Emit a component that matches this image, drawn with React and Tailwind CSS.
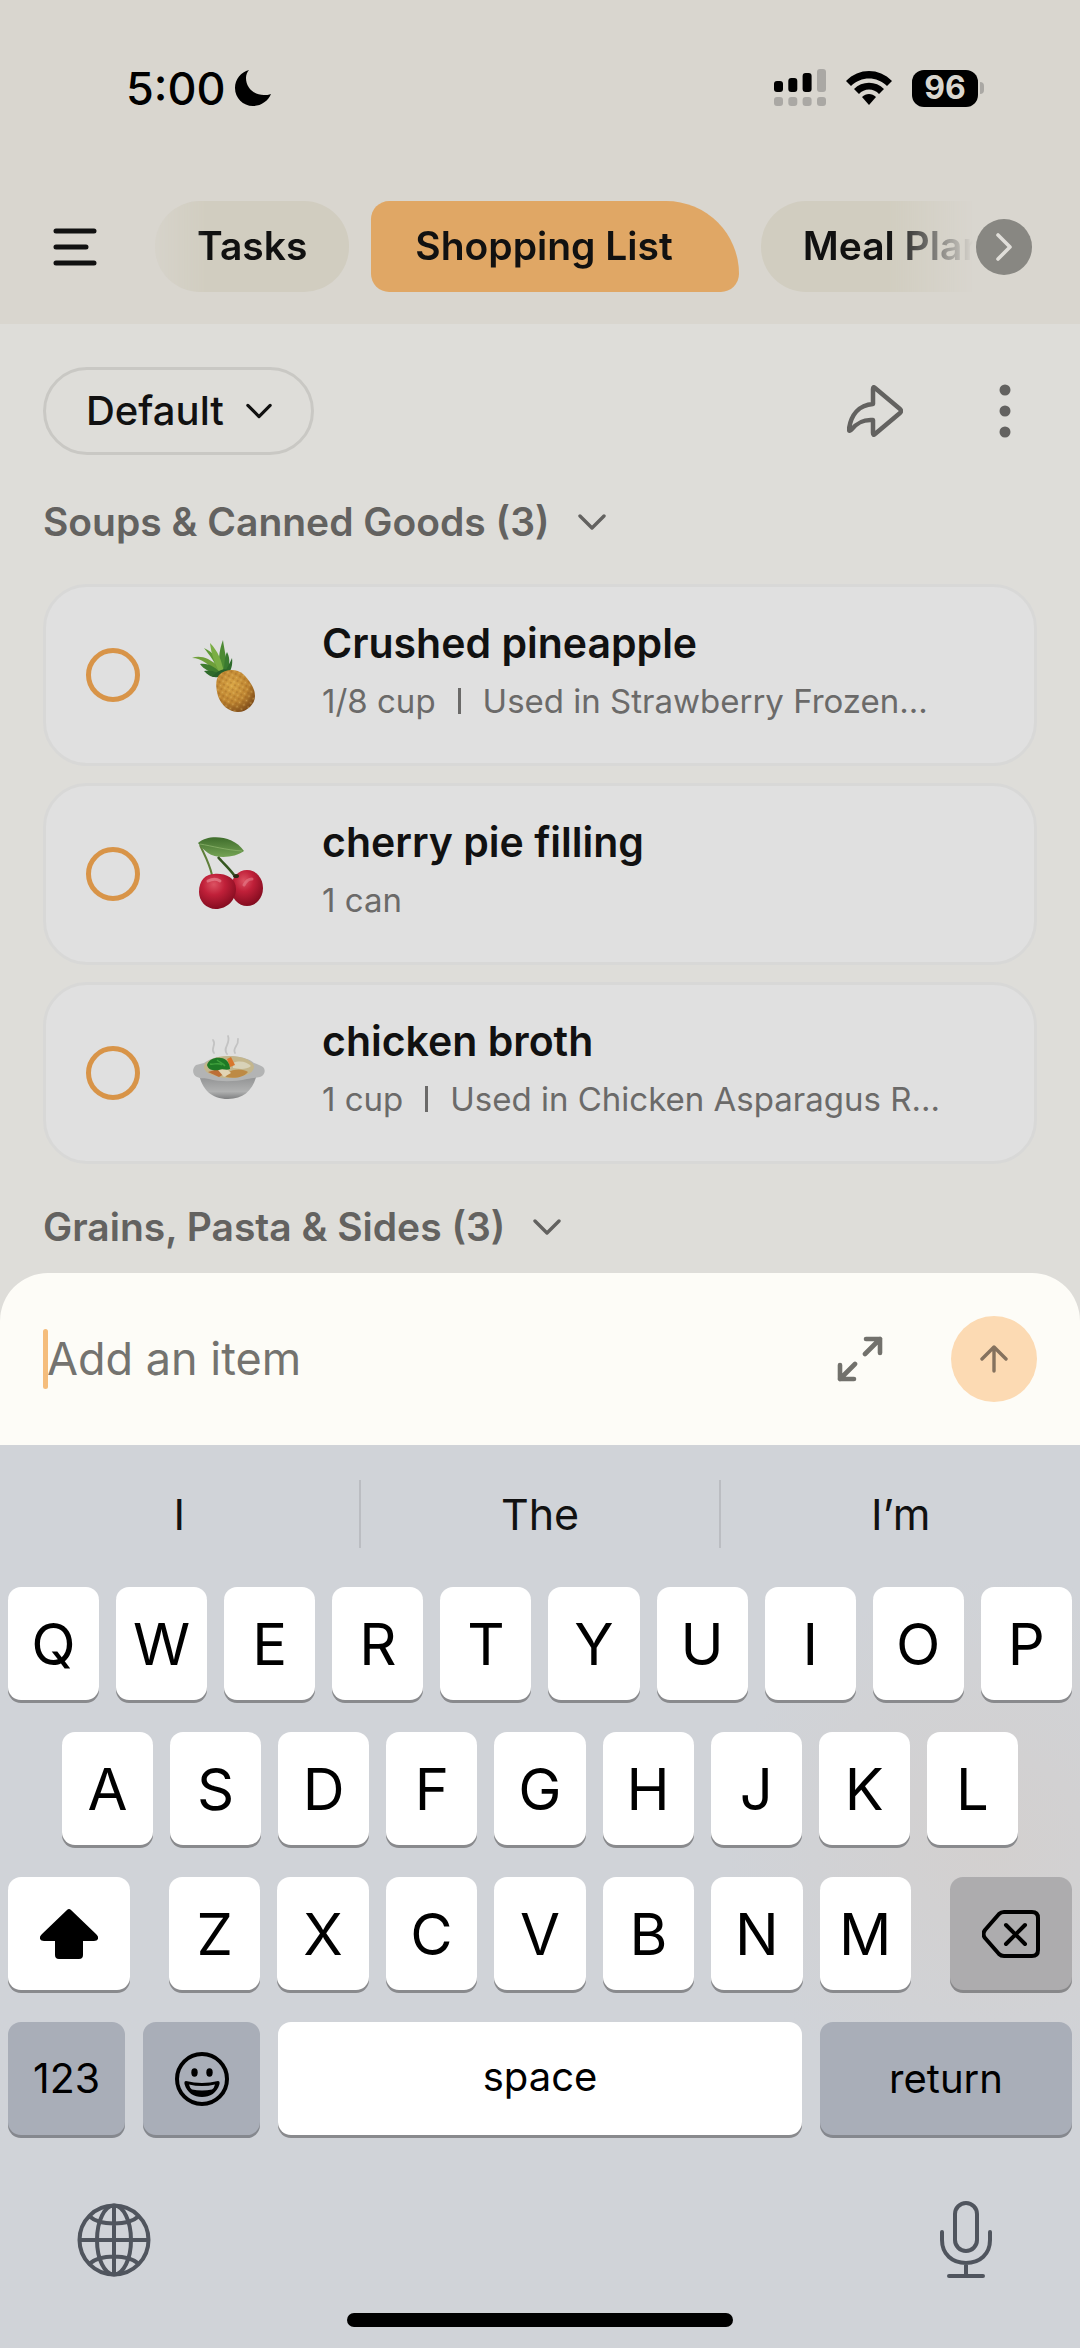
import { useState } from "react";

const soups = [
  {
    id: "pineapple",
    name: "Crushed pineapple",
    amount: "1/8 cup",
    usedIn: "Used in Strawberry Frozen...",
    Picture: Pineapple,
  },
  {
    id: "cherry",
    name: "cherry pie filling",
    amount: "1 can",
    Picture: Cherries,
  },
  {
    id: "broth",
    name: "chicken broth",
    amount: "1 cup",
    usedIn: "Used in Chicken Asparagus R...",
    Picture: Soup,
  },
];

function Pineapple() {
  return (
    <svg viewBox="0 0 120 110" className="h-[110px] w-[120px]" aria-hidden="true">
      <defs>
        <radialGradient id="pineBody" cx="0.4" cy="0.35" r="0.7">
          <stop offset="0" stopColor="#d9a545" />
          <stop offset="0.6" stopColor="#bd8330" />
          <stop offset="1" stopColor="#7c4a18" />
        </radialGradient>
        <pattern id="pineSkin" width="5" height="5" patternUnits="userSpaceOnUse" patternTransform="rotate(30)">
          <circle cx="1.5" cy="1.5" r="1" fill="#edc873" />
          <circle cx="4" cy="4" r="0.9" fill="#8f5b1e" />
        </pattern>
      </defs>
      <g>
        <path d="M52 57C47 44 49 30 53 20c1 9 4 18 4 32z" fill="#4c8a33" />
        <path d="M52 55C38 45 32 38 22 38c8-3 17 0 26 8z" fill="#6f9f3a" />
        <path d="M50 54C44 40 40 36 34 28c9 4 16 12 20 24z" fill="#5f9a35" />
        <path d="M50 54C42 38 41 30 40 23c8 8 12 18 14 30z" fill="#7bae45" />
        <path d="M48 56C40 51 34 50 30 44c9-1 17 4 22 11z" fill="#3f7c2f" />
        <path d="M48 57C42 58 38 55 34 51c8-1 14 1 18 5z" fill="#2f6b2b" />
        <path d="M53 54C55 44 54 38 57 32c4 7 2 15 0 23z" fill="#3a7a30" />
        <path d="M54 55C57 47 60 43 62 38c1 7-1 13-5 18z" fill="#2e6a2b" />
        <path d="M42 57c8-9 14-9 18-6l-2 6z" fill="#28602a" />
      </g>
      <path d="M49 55c6-6 17-7 24-1 6 6 12 14 12 22 0 8-8 16-17 16-9 0-17-7-20-16-2-7-3-16 1-21z" fill="url(#pineBody)" />
      <path d="M49 55c6-6 17-7 24-1 6 6 12 14 12 22 0 8-8 16-17 16-9 0-17-7-20-16-2-7-3-16 1-21z" fill="url(#pineSkin)" opacity="0.45" />
    </svg>
  );
}

function Cherries() {
  return (
    <svg viewBox="0 0 120 110" className="h-[110px] w-[120px]" aria-hidden="true">
      <defs>
        <radialGradient id="cherrySkin" cx="0.4" cy="0.3" r="0.75">
          <stop offset="0" stopColor="#dc5262" />
          <stop offset="0.4" stopColor="#c02039" />
          <stop offset="1" stopColor="#7d0a1d" />
        </radialGradient>
        <linearGradient id="cherryLeaf" x1="0" y1="0" x2="0" y2="1">
          <stop offset="0" stopColor="#3f6d2c" />
          <stop offset="1" stopColor="#74a354" />
        </linearGradient>
      </defs>
      <path d="M30 26c4 9 9 17 12 30" fill="none" stroke="#5f7f3a" strokeWidth="2" />
      <ellipse cx="77" cy="69" rx="16" ry="18" fill="url(#cherrySkin)" />
      <path d="M28 24c10-9 35-8 46 8-9 7-28 8-36 2-4-3-7-6-10-10z" fill="url(#cherryLeaf)" />
      <path d="M30 25c12 2 26 6 42 7" fill="none" stroke="#8bb36b" strokeWidth="0.8" />
      <path d="M48 38c4 5 11 11 16 18" fill="none" stroke="#35561f" strokeWidth="2.6" />
      <path d="M29 73c0-12 7-18 15-18 10-1 22 3 22 15 0 11-9 20-20 20-10 0-17-8-17-17z" fill="url(#cherrySkin)" />
      <path d="M74 66c2-4 5-6 8-6" fill="none" stroke="#e98b97" strokeWidth="3" strokeLinecap="round" opacity="0.5" />
      <path d="M38 62c4-2 9-2 12 0" fill="none" stroke="#f1a0a8" strokeWidth="3" strokeLinecap="round" opacity="0.5" />
      <ellipse cx="66" cy="57" rx="3" ry="2" fill="#2f2a14" />
    </svg>
  );
}

function Soup() {
  return (
    <svg viewBox="0 0 120 110" className="h-[110px] w-[120px]" aria-hidden="true">
      <defs>
        <linearGradient id="bowl" x1="0" y1="0" x2="0" y2="1">
          <stop offset="0" stopColor="#8c8d8e" />
          <stop offset="0.7" stopColor="#b0b1b1" />
          <stop offset="1" stopColor="#7e7f80" />
        </linearGradient>
      </defs>
      <g fill="none" stroke="#c3c3c3" strokeWidth="1.8" strokeLinecap="round">
        <path d="M44 35c-4-5 3-8-1-13" />
        <path d="M57 36c-5-6 4-10 1-18" />
        <path d="M65 35c-3-5 4-7 3-14" />
      </g>
      <path d="M29 56c3 15 12 25 29 25 16 0 25-9 29-25z" fill="url(#bowl)" />
      <path d="M26 47c3-1 5-1 8-2 11-9 41-9 50 0 3 1 6 2 9 4 3 3 2 8-3 10-5 1-9 1-13 2-12 3-28 3-38 0-4-1-8 0-12-2-5-2-5-9-1-12z" fill="#b3b4b4" />
      <ellipse cx="59" cy="49" rx="25" ry="11" fill="#c4b68c" />
      <path d="M57 55c7-5 17-4 21-1-4 5-13 7-22 5z" fill="#bd8a45" />
      <path d="M63 45c7-3 14-1 18 3-5 4-12 3-18 2z" fill="#d8d2b8" />
      <path d="M38 54l10-3 6 5-5 3z" fill="#bd6f36" />
      <path d="M48 52l8-2 5 5-7 4z" fill="#e2d4b4" />
      <path d="M57 41l4-2 4 8-5 2z" fill="#d9762b" />
      <path d="M37 47c2-6 8-8 14-7 5 0 9 5 9 11-4 2-7-1-11 1-5 1-11 0-12-5z" fill="#1f7a26" />
      <path d="M40 46c4 1 8-2 12 1M47 42c2 2 6 3 8 6" stroke="#3fa03c" strokeWidth="1.4" fill="none" />
    </svg>
  );
}

function Chevron({ className }) {
  return (
    <svg viewBox="0 0 28 16" fill="none" stroke="currentColor" strokeWidth="3.4" strokeLinecap="round" strokeLinejoin="round" className={className} aria-hidden="true">
      <path d="M2 2l12 12L26 2" />
    </svg>
  );
}

function StatusBar() {
  return (
    <div className="flex h-[176px] items-center justify-between pl-[126px] pr-24 text-black">
      <div className="flex items-center gap-[9px]">
        <span className="text-[45px] leading-none font-medium">5:00</span>
        <svg viewBox="0 0 36 36" className="size-9" aria-hidden="true">
          <path d="M14 0C6 2 0 9 0 18c0 10 8 18 18 18 8 0 15-5 18-12-2 1-5 1-7 1C19 25 11 18 11 8c0-3 1-6 3-8z" />
        </svg>
      </div>
      <div className="flex items-center gap-5">
        <svg viewBox="0 0 52 38" className="h-[38px] w-[52px]" aria-hidden="true">
          <rect x="0" y="12" width="9" height="11" rx="3" />
          <rect x="14.3" y="9" width="9" height="14" rx="3" />
          <rect x="28.6" y="4" width="9" height="19" rx="3" />
          <g fill="#aaa8a4">
            <rect x="43" y="0" width="9" height="23" rx="3" />
            <rect x="0" y="28" width="9" height="9" rx="3" />
            <rect x="14.3" y="28" width="9" height="9" rx="3" />
            <rect x="28.6" y="28" width="9" height="9" rx="3" />
            <rect x="43" y="28" width="9" height="9" rx="3" />
          </g>
        </svg>
        <svg viewBox="0 0 46 34" className="h-[34px] w-[46px]" aria-hidden="true">
          <path d="M0 10C13-3.300 33-3.300 46 10l-5 5C31 5 15 5 5 15z" />
          <path d="M8 18c8-8.500 22-8.500 30 0l-5 5c-5-6-15-6-20 0z" />
          <path d="M16 26c4-4 10-4 14 0l-7 8z" />
        </svg>
        <div className="flex items-center gap-[2px]">
          <span className="flex h-[37px] w-[66px] items-center justify-center rounded-xl bg-black text-[32px] leading-none font-bold text-[#d9d6cf]">
            96
          </span>
          <span className="h-3 w-1 rounded-r-full bg-[#aaa8a4]" />
        </div>
      </div>
    </div>
  );
}

function Tabs() {
  return (
    <div className="flex items-center pt-[25px] pr-12 pb-8 pl-[53px]">
      <button type="button" aria-label="Menu" className="mr-[58px]">
        <svg viewBox="0 0 44 40" fill="none" stroke="#111" strokeWidth="5" strokeLinecap="round" className="h-10 w-11">
          <path d="M3 4h38M3 20h30M3 36h38" />
        </svg>
      </button>
      <nav className="flex flex-1 gap-[22px] overflow-hidden text-[39px] font-semibold whitespace-nowrap [mask-image:linear-gradient(to_right,rgba(0,0,0,0.3),black_50px,black_calc(100%_-_84px),transparent)]">
        <button type="button" className="h-[91px] rounded-[45px] bg-[#d1cdc0] px-[42px]">
          Tasks
        </button>
        <button type="button" className="h-[91px] rounded-[20px] rounded-tr-[80px] bg-[#e0a765] pr-[66px] pl-11">
          Shopping List
        </button>
        <button type="button" className="h-[91px] rounded-[45px] bg-[#d1cdc0] px-[42px]">
          Meal Plan
        </button>
      </nav>
      <button type="button" aria-label="More lists" className="ml-[3px] flex size-14 items-center justify-center rounded-full bg-[#888782]">
        <svg viewBox="0 0 16 28" fill="none" stroke="#e0ded9" strokeWidth="3.6" strokeLinecap="round" strokeLinejoin="round" className="h-7 w-4">
          <path d="M2 2l12 12L2 26" />
        </svg>
      </button>
    </div>
  );
}

function SectionHeading({ children }) {
  return (
    <h2>
      <button type="button" className="flex items-center gap-7 text-[39px] leading-[48px] font-semibold text-[#636260]">
        {children}
        <Chevron className="h-4 w-7" />
      </button>
    </h2>
  );
}

function Item({ item }) {
  const { id, name, amount, usedIn, Picture } = item;
  return (
    <li className="flex h-[182px] items-center rounded-[44px] border-[3px] border-[#d8d8d7] bg-[#e0e0e0] pl-10">
      <input
        id={id}
        type="checkbox"
        className="size-[54px] shrink-0 appearance-none rounded-full border-[5px] border-[#d89448] checked:bg-[#d89448]"
      />
      <div className="ml-[30px] shrink-0">
        <Picture />
      </div>
      <div className="ml-8 min-w-0 pb-2">
        <label htmlFor={id} className="block text-[41px] leading-[52px] font-semibold text-[#111]">
          {name}
        </label>
        <p className="mt-2 flex items-center text-[33px] leading-[48px] text-[#6b6a69]">
          {amount}
          {usedIn && (
            <>
              <span className="mx-[22px] h-[26px] w-[3px] bg-[#6b6a69]" />
              <span>{usedIn}</span>
            </>
          )}
        </p>
      </div>
    </li>
  );
}

function AddItem() {
  const [text, setText] = useState("");
  return (
    <form className="flex h-[172px] items-center rounded-t-[48px] bg-[#fdfcf7] px-[43px]" onSubmit={(e) => e.preventDefault()}>
      <div className="relative min-w-0 flex-1">
        <input
          type="text"
          aria-label="Add an item"
          placeholder="Add an item"
          value={text}
          onChange={(e) => setText(e.target.value)}
          className="block w-full bg-transparent pl-1 text-[45px] leading-[60px] text-[#111] caret-[#f5bd7c] outline-none placeholder:text-[#74736f]"
        />
        {!text && <span className="absolute top-0 left-0 h-full w-[5px] rounded-full bg-[#f5bd7c]" />}
      </div>
      <button type="button" aria-label="Expand" className="mr-[68px] text-[#72716c]">
        <svg viewBox="0 0 46 46" fill="none" stroke="currentColor" strokeWidth="4.6" strokeLinecap="round" strokeLinejoin="round" className="size-[46px]">
          <path d="M29 3h14v14M43 3L28 18M17 43H3V29M3 43l15-15" />
        </svg>
      </button>
      <button type="submit" aria-label="Add" className="flex size-[86px] items-center justify-center rounded-full bg-[#fcdab3] text-[#85725e]">
        <svg viewBox="0 0 28 28" fill="none" stroke="currentColor" strokeWidth="3.4" strokeLinecap="round" strokeLinejoin="round" className="size-7">
          <path d="M14 26V2M2 14L14 2l12 12" />
        </svg>
      </button>
    </form>
  );
}

function Key({ children }) {
  return (
    <button type="button" className="h-[113px] min-w-0 flex-1 rounded-[13px] bg-white text-[58px] leading-none shadow-[0_3px_0_#898a8d]">
      {children}
    </button>
  );
}

function Keyboard() {
  return (
    <div className="bg-[#d0d3d8] bg-[radial-gradient(circle_at_92%_44%,#d3d0cf,#d0d3d8_24%)] text-black">
      <div className="flex h-[142px] items-center pb-1 text-[43px] text-[#111]">
        <button type="button" className="h-[68px] flex-1">I</button>
        <button type="button" className="h-[68px] flex-1 border-x-2 border-[#bbbdc2]">The</button>
        <button type="button" className="h-[68px] flex-1">I’m</button>
      </div>
      <div className="flex flex-col gap-8">
        <div className="flex gap-[17px] px-2">
          {"QWERTYUIOP".split("").map((k) => (
            <Key key={k}>{k}</Key>
          ))}
        </div>
        <div className="flex gap-[17px] px-[62px]">
          {"ASDFGHJKL".split("").map((k) => (
            <Key key={k}>{k}</Key>
          ))}
        </div>
        <div className="flex gap-[39px] px-2">
          <button type="button" aria-label="Shift" className="flex h-[113px] w-[122px] items-center justify-center rounded-[13px] bg-white shadow-[0_3px_0_#898a8d]">
            <svg viewBox="0 0 58 50" className="h-[50px] w-[58px]">
              <path d="M27 1q2-2 4 0l25 24q3 3 2 5-1 2-4 2H43v14q0 4-4 4H19q-4 0-4-4V32H4q-3 0-4-2-1-2 2-5z" />
            </svg>
          </button>
          <div className="flex flex-1 gap-[17px]">
            {"ZXCVBNM".split("").map((k) => (
              <Key key={k}>{k}</Key>
            ))}
          </div>
          <button type="button" aria-label="Delete" className="flex h-[113px] w-[122px] items-center justify-center rounded-[13px] bg-[#adacae] shadow-[0_3px_0_#88888a]">
            <svg viewBox="0 0 58 48" fill="none" stroke="black" strokeWidth="4" strokeLinecap="round" strokeLinejoin="round" className="h-12 w-[58px]">
              <path d="M22 2h28q6 0 6 6v32q0 6-6 6H22q-3 0-5-2L3 28q-3-4 0-8L17 4q2-2 5-2z" />
              <path d="M24 15l19 19M43 15L24 34" />
            </svg>
          </button>
        </div>
        <div className="flex gap-[18px] px-2 text-[40px]">
          <button type="button" className="h-[113px] w-[117px] rounded-[13px] bg-[#a9aeb8] text-[41px] shadow-[0_3px_0_#85888e]">
            123
          </button>
          <button type="button" aria-label="Emoji" className="flex h-[113px] w-[117px] items-center justify-center rounded-[13px] bg-[#a9aeb8] shadow-[0_3px_0_#85888e]">
            <svg viewBox="0 0 54 54" className="size-[54px]">
              <circle cx="27" cy="27" r="25" fill="none" stroke="black" strokeWidth="4" />
              <ellipse cx="19.5" cy="20.5" rx="3.2" ry="4.2" />
              <ellipse cx="34.5" cy="20.5" rx="3.2" ry="4.2" />
              <path d="M11 29q16 4 32 0 2 0 1.500 3C42 41 35 45 27 45S12 41 9.500 32q-.5-3 1.500-3z" />
              <path d="M14 32.500q13 3 26 0-1 4-3 5-10 2-20 0-2-1-3-5z" fill="#a9aeb8" />
            </svg>
          </button>
          <button type="button" className="h-[113px] flex-1 rounded-[13px] bg-white pb-1 shadow-[0_3px_0_#898a8d]">
            space
          </button>
          <button type="button" className="h-[113px] w-[252px] rounded-[13px] bg-[#a9aeb8] shadow-[0_3px_0_#85888e]">
            return
          </button>
        </div>
      </div>
      <div className="mt-[66px] flex items-center justify-between pr-[88px] pl-[77px] text-[#50555e]">
        <button type="button" aria-label="Next keyboard">
          <svg viewBox="0 0 74 74" fill="none" stroke="currentColor" strokeWidth="4" className="size-[74px]">
            <circle cx="37" cy="37" r="34.5" />
            <ellipse cx="37" cy="37" rx="17" ry="34.5" />
            <path d="M37 2v70M2 37h70M12 13c11 10 39 10 50 0M12 61c11-10 39-10 50 0" />
          </svg>
        </button>
        <button type="button" aria-label="Dictate">
          <svg viewBox="0 0 52 78" fill="none" stroke="currentColor" strokeWidth="4" strokeLinecap="round" className="h-[78px] w-[52px]">
            <rect x="15" y="2" width="22" height="48" rx="11" />
            <path d="M2 31v8c0 14 10 23 24 23s24-9 24-23v-8M26 62v13M9 75h34" />
          </svg>
        </button>
      </div>
      <div className="flex justify-center pt-[34px] pb-[21px]">
        <span className="h-[14px] w-[386px] rounded-full bg-black" />
      </div>
    </div>
  );
}

function App() {
  return (
    <div className="flex min-h-screen flex-col bg-[#deddd9] font-[Inter,sans-serif] text-[#111]">
      <header className="bg-[#d9d6cf]">
        <StatusBar />
        <Tabs />
      </header>

      <main className="flex-1 px-[43px] pt-[43px]">
        <div className="flex items-center justify-between">
          <button type="button" className="flex h-[88px] items-center gap-[22px] rounded-full border-[3px] border-[#c9c8c4] pr-[39px] pl-10 text-[40px] font-medium">
            Default
            <Chevron className="h-4 w-[26px]" />
          </button>
          <div className="flex items-center gap-[96px] pr-[26px] text-[#636260]">
            <button type="button" aria-label="Share">
              <svg viewBox="0 0 56 52" fill="none" stroke="currentColor" strokeWidth="4.5" strokeLinejoin="round" className="h-[52px] w-14">
                <path d="M26 4q0-3 2-1l25 21q2 2 0 4L28 49q-2 2-2-1V35C15 34 9 39 4 45q-2 2-2-1C4 30 12 20 26 19z" />
              </svg>
            </button>
            <button type="button" aria-label="More options">
              <svg viewBox="0 0 12 54" fill="currentColor" className="h-[54px] w-3">
                <circle cx="6" cy="6" r="5.5" />
                <circle cx="6" cy="27" r="5.5" />
                <circle cx="6" cy="48" r="5.5" />
              </svg>
            </button>
          </div>
        </div>

        <div className="mt-[43px]">
          <SectionHeading>Soups & Canned Goods (3)</SectionHeading>
        </div>
        <ul className="mt-[38px] flex flex-col gap-[17px]">
          {soups.map((item) => (
            <Item key={item.id} item={item} />
          ))}
        </ul>
        <div className="mt-[39px] pb-[21px]">
          <SectionHeading>Grains, Pasta & Sides (3)</SectionHeading>
        </div>
      </main>

      <AddItem />
      <Keyboard />
    </div>
  );
}

export default App;
